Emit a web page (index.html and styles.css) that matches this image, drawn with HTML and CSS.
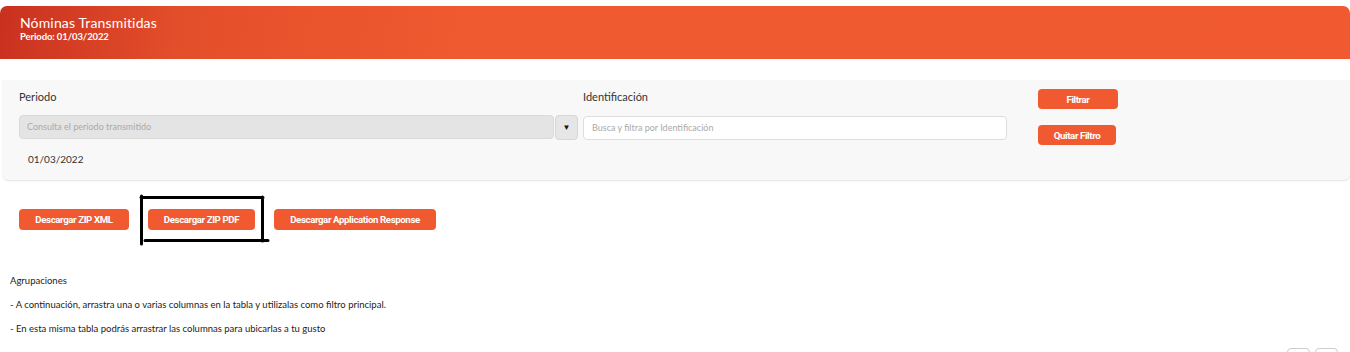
FILE: index.html
```html
<!DOCTYPE html>
<html lang="es">
<head>
  <meta charset="UTF-8">
  <meta name="viewport" content="width=device-width, initial-scale=1.0">
  <title>Nóminas Transmitidas</title>
  <link rel="stylesheet" href="styles.css">
</head>
<body>
  <header class="page-header">
    <h1>Nóminas Transmitidas</h1>
    <p>Periodo: 01/03/2022</p>
  </header>

  <section class="filters">
    <div class="field field-period">
      <label>Periodo</label>
      <div class="select-row">
        <div class="select-box">Consulta el periodo transmitido</div>
        <button class="select-arrow">&#9660;</button>
      </div>
      <span class="selected-date">01/03/2022</span>
    </div>
    <div class="field field-id">
      <label>Identificación</label>
      <input type="text" placeholder="Busca y filtra por Identificación">
    </div>
    <div class="filter-actions">
      <button class="btn btn-filter">Filtrar</button>
      <button class="btn btn-clear">Quitar Filtro</button>
    </div>
  </section>

  <section class="downloads">
    <button class="btn btn-xml">Descargar ZIP XML</button>
    <button class="btn btn-pdf">Descargar ZIP PDF</button>
    <button class="btn btn-app">Descargar Application Response</button>
    <svg class="mark" width="140" height="54" viewBox="138 194 140 54">
      <path d="M141.5 196 L141.5 244 M141 197.5 L263 197.5 M262.5 197 L262.5 241 M145 240.5 L268 240.5" stroke="#000" stroke-width="3" fill="none" stroke-linecap="round"/>
    </svg>
  </section>

  <section class="groups">
    <p>Agrupaciones</p>
    <p>- A continuación, arrastra una o varias columnas en la tabla y utilizalas como filtro principal.</p>
    <p>- En esta misma tabla podrás arrastrar las columnas para ubicarlas a tu gusto</p>
  </section>

  <div class="pager">
    <span></span>
    <span></span>
  </div>
</body>
</html>
```

FILE: styles.css
```css
* { margin: 0; padding: 0; box-sizing: border-box; }
body { font-family: Lato, 'Open Sans', sans-serif; background: #fff; color: #333; width: 1350px; height: 352px; overflow: hidden; position: relative; }

.page-header {
  margin-top: 6px; height: 53px;
  padding: 8px 20px;
  background: linear-gradient(100deg, #c9311f 0%, #e44f2b 14%, #f05a30 35%, #f15a30 100%);
  border-radius: 7px 7px 0 0;
  color: #fff;
}

.page-header h1 { font-size: 14px; font-weight: 400; line-height: 17px; letter-spacing: 0.15px; }
.page-header p { font-size: 9.5px; font-weight: 700; line-height: 11px; letter-spacing: -0.1px; }

.filters {
  margin: 21px 0 0 3px; height: 100px;
  background: #f8f8f8;
  border-radius: 0 0 6px 6px;
  box-shadow: 0 1px 2px rgba(0,0,0,0.12);
  padding: 10px 16px 0;
  display: flex;
}

.field label { display: block; font-size: 11px; line-height: 14px; color: #333; margin-bottom: 11px; }

.field-period { width: 559px; }
.select-row { display: flex; gap: 1px; }

.select-box {
  flex: 1; height: 24px;
  background: #e4e4e4; border: 1px solid #dadada; border-radius: 4px;
  font-size: 9px; color: #aaa; line-height: 22px; padding-left: 7px;
}

.select-arrow {
  width: 23px; height: 25px;
  background: #e6e6e6; border: 1px solid #d6d6d6; border-radius: 4px;
  font-size: 8px; color: #111; cursor: pointer;
}

.selected-date { display: block; font-size: 10px; margin: 13px 0 0 9px; color: #333; }

.field-id { width: 424px; margin-left: 5px; }

.field-id input {
  width: 100%; height: 24px;
  border: 1px solid #ddd; border-radius: 4px; background: #fff;
  font-family: inherit; font-size: 9px; padding-left: 8px; color: #333;
}

.field-id input::placeholder { color: #aaa; }

.filter-actions {
  margin-left: 31px;
  display: flex; flex-direction: column; align-items: flex-start; gap: 16px;
}

.btn {
  background: #f15a30; color: #fff; border: none; border-radius: 4px;
  font-family: Roboto, sans-serif; font-weight: 700; font-size: 9.7px; letter-spacing: -0.4px;
  cursor: pointer;
}

.btn-filter { width: 80px; height: 20px; margin-top: -1px; }
.btn-clear { width: 78px; height: 20px; }

.downloads {
  position: relative;
  margin-top: 29px; padding-left: 19px;
  display: flex; gap: 19px;
}

.downloads .btn { height: 21px; }
.btn-xml { width: 110px; }
.btn-pdf { width: 107px; }
.btn-app { width: 162px; }

.mark { position: absolute; left: 138px; top: -15px; }

.groups { margin-top: 44px; padding-left: 10px; }
.groups p { font-size: 9.5px; line-height: 13px; margin-bottom: 11px; color: #222; }

.pager { position: absolute; left: 1287px; top: 348px; display: flex; gap: 5px; }
.pager span { width: 23px; height: 20px; border: 1px solid #ccc; border-radius: 4px; }
```
